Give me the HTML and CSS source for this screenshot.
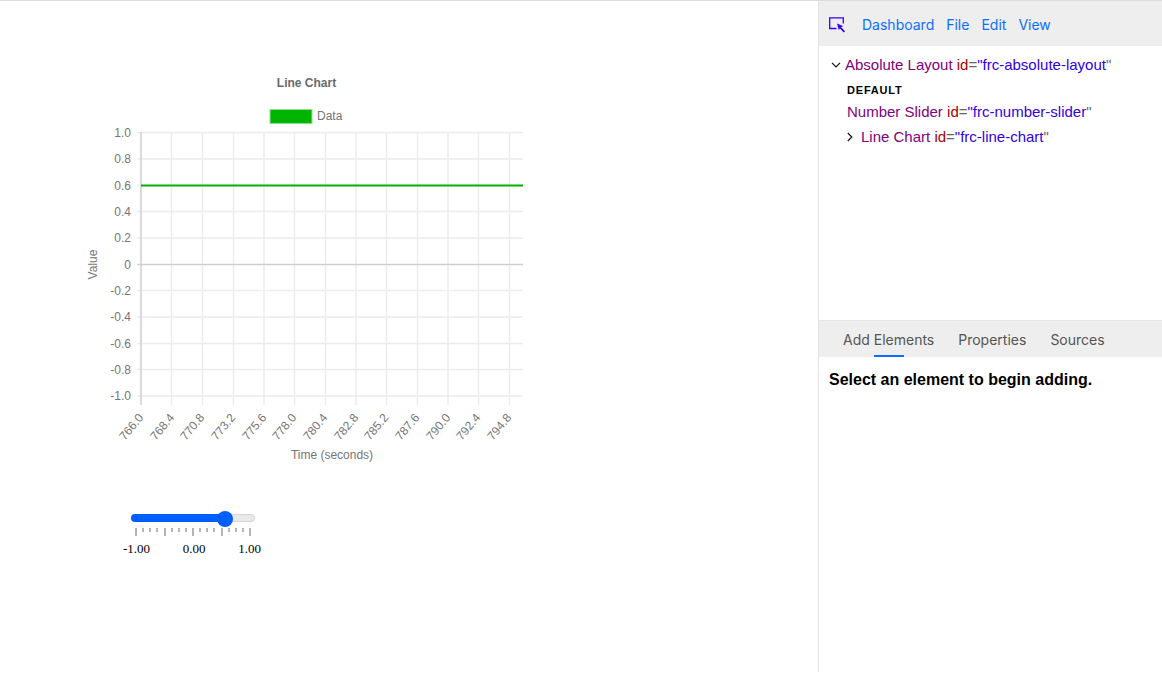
FILE: index.html
```html
<!DOCTYPE html>
<html lang="en">
<head>
<meta charset="utf-8">
<title>Dashboard</title>
<link rel="stylesheet" href="styles.css">
</head>
<body>
<div class="app">
  <main class="canvas">
    <svg class="chart" width="540" height="400" viewBox="70 70 540 400">
      <text class="chart-title" x="306.500" y="87" text-anchor="middle">Line Chart</text>
      <rect x="270" y="109.500" width="42" height="14" fill="#00b400" stroke="#8fe08f"/>
      <text class="chart-text" x="317" y="120">Data</text>
      <g class="grid">
        <path d="M171.500 132V405M202.500 132V405M233.500 132V405M264 132V405M294.500 132V405M325.500 132V405M356 132V405M386.500 132V405M417.500 132V405M448 132V405M478.500 132V405M509.500 132V405"/>
        <path d="M137 132.500H523M137 159H523M137 185.500H523M137 211.500H523M137 238H523M137 290.500H523M137 317H523M137 343.500H523M137 369.500H523M137 396H523"/>
      </g>
      <path class="axis" d="M141 132V405M137 264.500H523"/>
      <path class="series" d="M141 185.500H523"/>
      <g class="chart-text" text-anchor="end">
        <text x="131" y="137">1.0</text>
        <text x="131" y="163">0.8</text>
        <text x="131" y="190">0.6</text>
        <text x="131" y="216">0.4</text>
        <text x="131" y="242">0.2</text>
        <text x="131" y="269">0</text>
        <text x="131" y="295">-0.2</text>
        <text x="131" y="321">-0.4</text>
        <text x="131" y="348">-0.6</text>
        <text x="131" y="374">-0.8</text>
        <text x="131" y="400">-1.0</text>
      </g>
      <g class="chart-text" text-anchor="end">
        <text transform="translate(144 418) rotate(-50)">766.0</text>
        <text transform="translate(175 418) rotate(-50)">768.4</text>
        <text transform="translate(205 418) rotate(-50)">770.8</text>
        <text transform="translate(236 418) rotate(-50)">773.2</text>
        <text transform="translate(267 418) rotate(-50)">775.6</text>
        <text transform="translate(297 418) rotate(-50)">778.0</text>
        <text transform="translate(328 418) rotate(-50)">780.4</text>
        <text transform="translate(359 418) rotate(-50)">782.8</text>
        <text transform="translate(389 418) rotate(-50)">785.2</text>
        <text transform="translate(420 418) rotate(-50)">787.6</text>
        <text transform="translate(451 418) rotate(-50)">790.0</text>
        <text transform="translate(481 418) rotate(-50)">792.4</text>
        <text transform="translate(512 418) rotate(-50)">794.8</text>
      </g>
      <text class="chart-text" x="332" y="459" text-anchor="middle">Time (seconds)</text>
      <text class="chart-text" transform="translate(97 264.500) rotate(-90)" text-anchor="middle">Value</text>
    </svg>

    <div class="slider">
      <div class="track"><div class="fill"></div><div class="thumb"></div></div>
      <div class="ticks">
        <i class="tick major"></i><i class="tick"></i><i class="tick"></i><i class="tick"></i>
        <i class="tick major"></i><i class="tick"></i><i class="tick"></i><i class="tick"></i>
        <i class="tick major"></i><i class="tick"></i><i class="tick"></i><i class="tick"></i>
        <i class="tick major"></i><i class="tick"></i><i class="tick"></i><i class="tick"></i>
        <i class="tick major"></i>
      </div>
      <div class="slider-labels"><span>-1.00</span><span>0.00</span><span>1.00</span></div>
    </div>
  </main>

  <aside class="sidebar">
    <header class="menubar">
      <svg class="inspect" width="18" height="16" viewBox="0 0 18 16">
        <path d="M7.500 11.500H.7V.9H14.300V6.500" fill="none" stroke="#3300ff" stroke-width="1.300"/>
        <path d="M8 6.500L14 9L12.200 10.300L16 14.200L14.700 15.500L11 11.500L9.800 13Z" fill="#3300ff"/>
      </svg>
      <nav class="menu">
        <a class="menu-link">Dashboard</a>
        <a class="menu-link">File</a>
        <a class="menu-link">Edit</a>
        <a class="menu-link">View</a>
      </nav>
    </header>

    <section class="tree">
      <div class="node root">
        <svg class="chev" width="10" height="6" viewBox="0 0 10 6"><path d="M1 .8L5 4.800L9 .8" fill="none" stroke="#111" stroke-width="1.200"/></svg>
        <span class="tag">Absolute Layout</span>&nbsp;<span class="attr">id</span><span class="eq">=</span><span class="val">"frc-absolute-layout</span><span class="eq">"</span>
      </div>
      <div class="slot">DEFAULT</div>
      <div class="node child">
        <span class="tag">Number Slider</span>&nbsp;<span class="attr">id</span><span class="eq">=</span><span class="val">"frc-number-slider</span><span class="eq">"</span>
      </div>
      <div class="node child">
        <svg class="chev side" width="6" height="10" viewBox="0 0 6 10"><path d="M.8 1L4.800 5L.8 9" fill="none" stroke="#111" stroke-width="1.200"/></svg>
        <span class="tag">Line Chart</span>&nbsp;<span class="attr">id</span><span class="eq">=</span><span class="val">"frc-line-chart</span><span class="eq">"</span>
      </div>
    </section>

    <nav class="tabs">
      <a class="tab active">Add Elements</a>
      <a class="tab">Properties</a>
      <a class="tab">Sources</a>
    </nav>
    <section class="panel">
      <p class="hint">Select an element to begin adding.</p>
    </section>
  </aside>
</div>
</body>
</html>
```

FILE: styles.css
```css
* { box-sizing: border-box; }

html, body {
  margin: 0;
  height: 100%;
  overflow: hidden;
  background: #fff;
}

body {
  font-family: "Liberation Sans", Arial, sans-serif;
}

.app {
  display: flex;
  height: 672px;
  border-top: 1px solid #ddd;
}

.canvas {
  position: relative;
  flex: 0 0 818px;
}

.chart {
  position: absolute;
  left: 70px;
  top: 69px;
}

.chart-title {
  font: bold 12px "Liberation Sans", Arial, sans-serif;
  fill: #6a6a6a;
}

.chart-text {
  font: 12px "Liberation Sans", Arial, sans-serif;
  fill: #757575;
}

.grid path {
  fill: none;
  stroke: #ececec;
  stroke-width: 1.400;
}

.axis {
  fill: none;
  stroke: #cecece;
  stroke-width: 1.500;
}

.series {
  fill: none;
  stroke: #00b400;
  stroke-width: 2;
}

.slider {
  position: absolute;
  left: 122px;
  top: 513px;
  width: 140px;
}

.track {
  position: relative;
  margin: 0 7px 0 9px;
  height: 8px;
  border-radius: 4px;
  background: #e9e9e9;
  border: 1px solid #d4d4d4;
}

.fill {
  position: absolute;
  left: -1px;
  top: -1px;
  width: 94px;
  height: 8px;
  border-radius: 4px 0 0 4px;
  background: #0060ff;
}

.thumb {
  position: absolute;
  left: 85px;
  top: -4px;
  width: 16px;
  height: 16px;
  border-radius: 50%;
  background: #0060ff;
}

.ticks {
  display: flex;
  justify-content: space-between;
  align-items: flex-start;
  margin: 6px 11px 0 13px;
}

.tick {
  display: block;
  width: 2px;
  height: 4px;
  background: #b4b4b4;
}

.tick.major {
  height: 8px;
}

.slider-labels {
  display: flex;
  justify-content: space-between;
  margin-top: 5px;
  font: 13px/15px "Liberation Serif", "Times New Roman", serif;
  color: #000;
}

.slider-labels span:first-child { margin-left: 1px; }
.slider-labels span:last-child { margin-right: 1px; }

.sidebar {
  flex: 1;
  display: flex;
  flex-direction: column;
  min-width: 0;
  border-left: 1px solid #e3e3e3;
}

.menubar {
  flex: 0 0 45px;
  display: flex;
  align-items: center;
  padding: 3px 10px 0;
  background: #eee;
}

.inspect {
  flex: none;
}

.menu {
  display: flex;
  gap: 12px;
  margin-left: 15px;
}

.menu-link {
  font: 14px/20px Inter, "Liberation Sans", sans-serif;
  color: #0d6efd;
}

.tree {
  flex: 0 0 274px;
  padding: 9px 0 0 12px;
  font-size: 15px;
  line-height: 20px;
}

.node {
  display: flex;
  align-items: center;
  white-space: nowrap;
}

.chev {
  flex: none;
  margin-right: 4px;
}

.chev.side {
  margin-right: 8px;
}

.child {
  margin: 4px 0 0 16px;
  height: 21px;
}

.slot {
  margin: 8px 0 3px 16px;
  font-size: 11px;
  line-height: 14px;
  font-weight: bold;
  letter-spacing: .8px;
  color: #000;
}

.tag { color: #800080; }
.attr { color: #a80000; }
.eq { color: #666; }
.val { color: #3300e0; }

.tabs {
  flex: 0 0 37px;
  display: flex;
  gap: 24px;
  padding: 1px 0 0 24px;
  background: #eee;
  border-top: 1px solid #e6e6e6;
}

.tab {
  position: relative;
  font: 14px/35px Inter, "Liberation Sans", sans-serif;
  color: #555;
}

.tab.active::after {
  content: "";
  position: absolute;
  left: 31px;
  bottom: 0;
  width: 30px;
  height: 2px;
  background: #0d6efd;
}

.panel {
  flex: 1;
  padding: 13px 10px;
}

.hint {
  margin: 0;
  font-size: 16px;
  line-height: 20px;
  font-weight: bold;
  color: #000;
}
```
